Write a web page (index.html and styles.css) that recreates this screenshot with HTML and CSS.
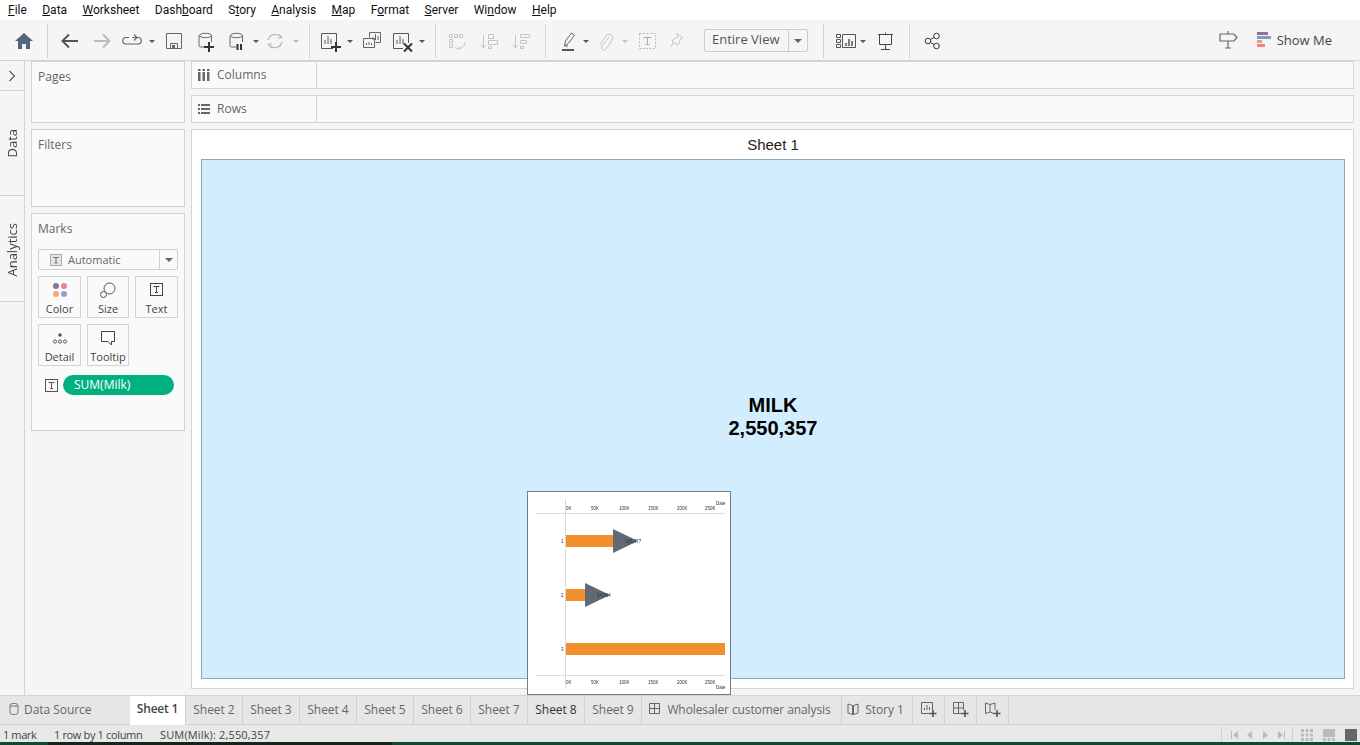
FILE: index.html
```html
<!DOCTYPE html>
<html lang="en">
<head>
    <meta charset="UTF-8">
    <meta name="viewport" content="width=device-width, initial-scale=1.0">
    <title>Tableau - Sheet 1</title>
    <link rel="stylesheet" href="styles.css">
</head>
<body>
    <nav class="menubar">
        <span><u>F</u>ile</span>
        <span><u>D</u>ata</span>
        <span><u>W</u>orksheet</span>
        <span>Dash<u>b</u>oard</span>
        <span>S<u>t</u>ory</span>
        <span><u>A</u>nalysis</span>
        <span><u>M</u>ap</span>
        <span>F<u>o</u>rmat</span>
        <span><u>S</u>erver</span>
        <span>Wi<u>n</u>dow</span>
        <span><u>H</u>elp</span>
    </nav>

    <div class="toolbar">
        <svg width="47" height="40" viewBox="0 20 47 40">
            <path d="M15 41l9-8 9 8h-3v8h-4v-5h-4v5h-4v-8z" fill="#56667a"/>
        </svg>
        <div class="sep"></div>
        <svg width="261" height="40" viewBox="48 20 261 40" fill="none" stroke-width="1">
            <path d="M78 41H63M69 34.500l-6.500 6.500 6.500 6.500" stroke="#555" stroke-width="2"/>
            <path d="M94 41h15M103 34.500l6.500 6.500-6.500 6.500" stroke="#bbb" stroke-width="2"/>
            <path d="M129 37.500h-3a3 3 0 0 0 0 6.500h12a3 3 0 0 0 0-6.500h-6M134 34.500l3 3-3 3" stroke="#666" stroke-width="1.200"/>
            <path d="M149 40h6l-3 3z" fill="#555"/>
            <path d="M166.500 33.500h15v15h-15zM170.500 48.500v-5h7v5" stroke="#666"/>
            <rect x="172" y="45" width="3" height="3" fill="#666"/>
            <path d="M208 47h-7.500a1.500 1.500 0 0 1-1.500-1.500V35.500M211.500 35.500V42M199.500 35.500a6 2.200 0 0 1 12 0a6 2.200 0 0 1-12 0" stroke="#666"/>
            <path d="M209 42v10M204 47h10" stroke="#333" stroke-width="2"/>
            <path d="M236 47h-4.500a1.500 1.500 0 0 1-1.500-1.500V35.500M242.500 35.500V42M230.500 35.500a6 2.200 0 0 1 12 0a6 2.200 0 0 1-12 0" stroke="#666"/>
            <path d="M237.500 44v6M241 44v6" stroke="#333" stroke-width="2"/>
            <path d="M253 40h6l-3 3z" fill="#555"/>
            <path d="M268 40a7.500 7.500 0 0 1 13-3M282 42a7.500 7.500 0 0 1-13 3M279 34.500l2.500 3-3.500 1M271 47.500l-2.500-3 3.500-1" stroke="#bbb" stroke-width="1.300"/>
            <path d="M293 40h6l-3 3z" fill="#bbb"/>
        </svg>
        <div class="sep"></div>
        <svg width="125" height="40" viewBox="310 20 125 40" fill="none">
            <path d="M333 48.500h-11.500v-15h15V43M325 44v-4M328 44v-8M331 44v-5" stroke="#555"/>
            <path d="M336 42v10M331 47h10" stroke="#333" stroke-width="2"/>
            <path d="M347 40h6l-3 3z" fill="#555"/>
            <path d="M369.500 37.500v-5h11v10h-5M373 40v-3M375.500 40v-6M378 40v-4M363.500 38.500h11v9h-11zM366.500 45v-2M369 45v-3M371.500 45v-2" stroke="#666"/>
            <path d="M403 48.500h-9.500v-15h15V43M397 44v-4M400 44v-8M403 44v-5" stroke="#555"/>
            <path d="M404 43.500l8 8M412 43.500l-8 8" stroke="#333" stroke-width="2"/>
            <path d="M419 40h6l-3 3z" fill="#555"/>
        </svg>
        <div class="sep"></div>
        <svg width="109" height="40" viewBox="436 20 109 40" fill="none" stroke="#c4c4c4">
            <path d="M449.500 34.500h3v3h-3zM454.500 34.500h3v3h-3zM459.500 34.500h3v3h-3zM449.500 39.500h3v3h-3zM449.500 44.500h3v3h-3zM465 42a8 8 0 0 1-7 7M455 47l3 2.500 1.500-3"/>
            <path d="M483.500 35v13M481 45l2.500 3 2.500-3M488.500 34.500h5v4h-5zM488.500 40.500h9v4h-9zM488.500 46.500h3v2h-3z"/>
            <path d="M515.500 35v13M513 45l2.500 3 2.500-3M520.500 34.500h9v3h-9zM520.500 40.500h6v3h-6zM520.500 46.500h3v2h-3z"/>
        </svg>
        <div class="sep"></div>
        <div class="tool-mid">
            <svg width="150" height="40" viewBox="546 20 150 40" fill="none">
                <path d="M564.500 46l1-5 6-8 3 2.200-6 8zM565 46h3" stroke="#666"/>
                <rect x="562" y="49" width="12" height="2" fill="#555"/>
                <path d="M583 40h6l-3 3z" fill="#555"/>
                <path d="M609 37l-7 9a2.500 2.500 0 0 0 4 3l6-9a3.500 3.500 0 0 0-6-4l-6.500 9" stroke="#c4c4c4"/>
                <path d="M622 40h6l-3 3z" fill="#c4c4c4"/>
                <rect x="639.500" y="33.500" width="16" height="15" stroke="#bbb" stroke-dasharray="2 1.500"/>
                <path d="M643.500 37.500h8M647.500 37.500v7M645.500 44.500h4" stroke="#aaa"/>
                <path d="M677 33.500l6 4.500-2.500 1-2 5-1.500 1-5-4 1-1.500 4.500-2zM673.500 42l-2.500 5" stroke="#c4c4c4"/>
            </svg>
            <div class="view-select">
                <span class="view-select-text">Entire View</span>
                <span class="view-select-arrow"><i class="caret"></i></span>
            </div>
        </div>
        <div class="sep"></div>
        <svg width="85" height="40" viewBox="824 20 85 40" fill="none">
            <path d="M836.500 34.500h4v3h-4zM836.500 39.500h4v3h-4zM836.500 44.500h4v3h-4zM842.500 34.500h13v13h-13z" stroke="#555"/>
            <path d="M846 46v-3M849 46v-7M852 46v-5" stroke="#555" stroke-width="1.500"/>
            <path d="M860 40h6l-3 3z" fill="#555"/>
            <path d="M878 34.500h15M879.500 34.500v10h12v-10M885.500 44.500v5M881 49.500h9M885.500 34.500v-2" stroke="#444"/>
        </svg>
        <div class="sep"></div>
        <svg width="40" height="40" viewBox="910 20 40 40" fill="none">
            <circle cx="928" cy="41" r="2.800" stroke="#333"/>
            <circle cx="936.500" cy="36" r="2.800" stroke="#333"/>
            <circle cx="936.500" cy="46" r="2.800" stroke="#333"/>
            <path d="M930.500 39.500l3.500-2M930.500 42.500l3.500 2" stroke="#333"/>
        </svg>
        <div class="toolbar-right">
            <svg width="20" height="20" viewBox="0 0 20 20" fill="none">
                <path d="M1 4h14l3 3.500-3 3.500H1zM9 4V1M9 11v7M6 18h6" stroke="#666" stroke-width="1.200"/>
            </svg>
            <div class="showme">
                <svg width="14" height="16" viewBox="0 0 14 16">
                    <rect x="0" y="0" width="11" height="3" fill="#8a7596"/>
                    <rect x="0" y="4" width="14" height="3" fill="#7f9cc9"/>
                    <rect x="0" y="8" width="5" height="3" fill="#f0a070"/>
                    <rect x="0" y="12" width="8" height="3" fill="#f0808a"/>
                </svg>
                <span>Show Me</span>
            </div>
        </div>
    </div>

    <div class="workspace">
        <aside class="rail">
            <div class="rail-item rail-toggle">
                <svg width="8" height="12" viewBox="0 0 8 12" fill="none"><path d="M1.500 1l5 5-5 5" stroke="#555" stroke-width="1.100"/></svg>
            </div>
            <div class="rail-item rail-data"><span>Data</span></div>
            <div class="rail-item rail-analytics"><span>Analytics</span></div>
        </aside>

        <section class="cards">
            <div class="card card-pages"><h2>Pages</h2></div>
            <div class="card card-filters"><h2>Filters</h2></div>
            <div class="card card-marks">
                <h2>Marks</h2>
                <div class="mark-select">
                    <svg width="12" height="12" viewBox="0 0 12 12" fill="none"><rect x=".5" y=".5" width="11" height="11" fill="#e4e4e4" stroke="#aaa"/><path d="M3 3.500h6M6 3.500v5.500M4.500 9h3" stroke="#777"/></svg>
                    <span class="mark-select-text">Automatic</span>
                    <span class="mark-select-arrow"><i class="caret"></i></span>
                </div>
                <div class="mark-grid">
                    <div class="mark-btn">
                        <svg width="16" height="16" viewBox="0 0 16 16"><circle cx="4" cy="4" r="3" fill="#8a7596"/><circle cx="12" cy="4" r="3" fill="#f0808a"/><circle cx="4" cy="12" r="3" fill="#f0a878"/><circle cx="12" cy="12" r="3" fill="#85a5cf"/></svg>
                        <span>Color</span>
                    </div>
                    <div class="mark-btn">
                        <svg width="16" height="16" viewBox="0 0 16 16" fill="none"><circle cx="9.500" cy="6.500" r="5.500" stroke="#555"/><circle cx="3.500" cy="12.500" r="3" fill="#fafafa" stroke="#555"/></svg>
                        <span>Size</span>
                    </div>
                    <div class="mark-btn">
                        <svg width="16" height="16" viewBox="0 0 16 16" fill="none"><rect x="1.500" y="1.500" width="12" height="12" stroke="#444"/><path d="M4.500 4.500h6M7.500 4.500v6M6 10.500h3" stroke="#444"/></svg>
                        <span>Text</span>
                    </div>
                    <div class="mark-btn">
                        <svg width="16" height="16" viewBox="0 0 16 16" fill="none"><circle cx="8" cy="5" r="1.800" fill="#555"/><circle cx="3" cy="11.500" r="1.600" stroke="#555"/><circle cx="8" cy="11.500" r="1.600" stroke="#555"/><circle cx="13" cy="11.500" r="1.600" stroke="#555"/></svg>
                        <span>Detail</span>
                    </div>
                    <div class="mark-btn">
                        <svg width="16" height="16" viewBox="0 0 16 16" fill="none"><path d="M1.500 1.500h13v10h-3v3.500l-3.500-3.500h-6.500z" stroke="#444"/></svg>
                        <span>Tooltip</span>
                    </div>
                </div>
                <div class="mark-pill-row">
                    <svg width="13" height="13" viewBox="0 0 13 13" fill="none"><rect x=".5" y=".5" width="12" height="12" stroke="#555"/><path d="M3.500 3.500h6M6.500 3.500v6M5 9.500h3" stroke="#555"/></svg>
                    <span class="pill">SUM(Milk)</span>
                </div>
            </div>
        </section>

        <section class="stage">
            <div class="shelf">
                <div class="shelf-label">
                    <svg width="12" height="12" viewBox="0 0 12 12" fill="#666"><rect x="0" y="3" width="2.500" height="9"/><rect x="4.500" y="3" width="2.500" height="9"/><rect x="9" y="3" width="2.500" height="9"/><rect x="0" y="0" width="2.500" height="2"/><rect x="4.500" y="0" width="2.500" height="2"/><rect x="9" y="0" width="2.500" height="2"/></svg>
                    <span>Columns</span>
                </div>
            </div>
            <div class="shelf">
                <div class="shelf-label">
                    <svg width="12" height="12" viewBox="0 0 12 12" fill="#666"><rect x="0" y="1" width="2" height="2"/><rect x="3" y="1" width="9" height="2"/><rect x="0" y="5" width="2" height="2"/><rect x="3" y="5" width="9" height="2"/><rect x="0" y="9" width="2" height="2"/><rect x="3" y="9" width="9" height="2"/></svg>
                    <span>Rows</span>
                </div>
            </div>
            <div class="view">
                <div class="view-title">Sheet 1</div>
                <div class="pane">
                    <div class="big-text">MILK<br>2,550,357</div>
                </div>
                <div class="thumb">
                    <svg class="thumb-chart" width="202" height="202" viewBox="0 1 202 202">
                        <path d="M37.500 8v190" stroke="#d8d8d8"/>
                        <path d="M8 22.500h189M8 184.500h189" stroke="#dcdcdc"/>
                        <rect x="38" y="44" width="47" height="12" fill="#f28e2b"/>
                        <rect x="38" y="98" width="19" height="12" fill="#f28e2b"/>
                        <rect x="38" y="152" width="159" height="12" fill="#f28e2b"/>
                        <path d="M85 38v24l25-12z" fill="#5f6a75"/>
                        <path d="M57 92v24l25-12z" fill="#5f6a75"/>
                        <g class="thumb-text">
                            <text x="188" y="14">Date</text>
                            <text x="38" y="19">0K</text><text x="63" y="19">50K</text><text x="91" y="19">100K</text><text x="120" y="19">150K</text><text x="149" y="19">200K</text><text x="177" y="19">250K</text>
                            <text x="38" y="193">0K</text><text x="63" y="193">50K</text><text x="91" y="193">100K</text><text x="120" y="193">150K</text><text x="149" y="193">200K</text><text x="177" y="193">250K</text>
                            <text x="188" y="198">Date</text>
                            <text x="33" y="52">1</text><text x="33" y="106">2</text><text x="33" y="160">3</text>
                            <text x="97" y="52">106,477</text><text x="69" y="106">54,864</text>
                        </g>
                    </svg>
                </div>
            </div>
        </section>
    </div>

    <div class="tabs">
        <div class="tab tab-source">
            <svg width="10" height="12" viewBox="0 0 10 12" fill="none"><rect x="1" y=".5" width="8" height="11" rx="2.500" stroke="#777"/><path d="M1 3h8" stroke="#777"/></svg>
            <span>Data Source</span>
        </div>
        <div class="tab tab-active">Sheet 1</div>
        <div class="tab tab-sheet">Sheet 2</div>
        <div class="tab tab-sheet">Sheet 3</div>
        <div class="tab tab-sheet">Sheet 4</div>
        <div class="tab tab-sheet">Sheet 5</div>
        <div class="tab tab-sheet">Sheet 6</div>
        <div class="tab tab-sheet">Sheet 7</div>
        <div class="tab tab-sheet tab-dark">Sheet 8</div>
        <div class="tab tab-sheet">Sheet 9</div>
        <div class="tab tab-dash">
            <svg width="12" height="12" viewBox="0 0 12 12" fill="none"><path d="M.5 .5h10v10h-10zM.5 5.500h10M5.500 .5v10" stroke="#666"/></svg>
            <span>Wholesaler customer analysis</span>
        </div>
        <div class="tab tab-story">
            <svg width="12" height="12" viewBox="0 0 12 12" fill="none"><path d="M1 1l4.500 1.500v9L1 10zM11 1L6.500 2.500v9L11 10z" stroke="#666"/></svg>
            <span>Story 1</span>
        </div>
        <div class="tab tab-add">
            <svg width="16" height="16" viewBox="0 0 16 16" fill="none"><path d="M9 11.500H.5V.5h11V8M3.500 8V6M6 8V3M8.500 8V5" stroke="#666"/><path d="M12 8v7M8.500 11.500h7" stroke="#555" stroke-width="1.600"/></svg>
        </div>
        <div class="tab tab-add">
            <svg width="16" height="16" viewBox="0 0 16 16" fill="none"><path d="M9 11.500H.5V.5h10V8M.5 6h10M5.500 .5v11" stroke="#666"/><path d="M12 8v7M8.500 11.500h7" stroke="#555" stroke-width="1.600"/></svg>
        </div>
        <div class="tab tab-add">
            <svg width="16" height="16" viewBox="0 0 16 16" fill="none"><path d="M9 11.500L5 10 .5 11.500V1L5 2.500 10 1v7M5 2.500V10" stroke="#666"/><path d="M12 8v7M8.500 11.500h7" stroke="#555" stroke-width="1.600"/></svg>
        </div>
    </div>

    <footer class="status">
        <span class="status-mark">1 mark</span>
        <span class="status-size">1 row by 1 column</span>
        <span class="status-value">SUM(Milk): 2,550,357</span>
        <div class="status-nav">
            <svg width="60" height="12" viewBox="0 0 60 12" fill="#bbb"><rect x="1" y="2" width="1" height="8"/><path d="M8 2v8L3 6z"/><path d="M22 2v8l-5-4z"/><path d="M33 2v8l5-4z"/><path d="M48 2v8l5-4z"/><rect x="54" y="2" width="1" height="8"/></svg>
        </div>
        <div class="status-views">
            <svg width="12" height="12" viewBox="0 0 12 12" fill="#bbb"><rect x="0" y="0" width="3" height="3"/><rect x="4.500" y="0" width="3" height="3"/><rect x="9" y="0" width="3" height="3"/><rect x="0" y="4.500" width="3" height="3"/><rect x="4.500" y="4.500" width="3" height="3"/><rect x="9" y="4.500" width="3" height="3"/><rect x="0" y="9" width="3" height="3"/><rect x="4.500" y="9" width="3" height="3"/><rect x="9" y="9" width="3" height="3"/></svg>
            <svg width="12" height="12" viewBox="0 0 12 12" fill="#bbb"><rect x="0" y="0" width="12" height="8"/><rect x="0" y="9" width="3" height="3"/><rect x="4.500" y="9" width="3" height="3"/><rect x="9" y="9" width="3" height="3"/></svg>
            <svg width="12" height="12" viewBox="0 0 12 12" fill="#666"><rect x="0" y="0" width="12" height="12"/></svg>
        </div>
    </footer>
    <div class="taskbar"></div>
</body>
</html>
```

FILE: styles.css
```css
* {
    box-sizing: border-box;
}
html, body {
    height: 745px;
    overflow: hidden;
}
body {
    margin: 0;
    display: flex;
    flex-direction: column;
    font-family: "Open Sans", Arial, sans-serif;
    font-size: 12px;
    color: #555;
    background: #f5f5f5;
}
svg {
    display: block;
    flex-shrink: 0;
}

/* menu */
.menubar {
    height: 20px;
    background: #fff;
    display: flex;
    align-items: center;
    padding-left: 8px;
    gap: 15.4px;
    color: #111;
    font-family: Roboto, Arial, sans-serif;
    font-size: 12px;
}

/* toolbar */
.toolbar {
    height: 41px;
    display: flex;
    border-bottom: 1px solid #d4d4d4;
    background: #f5f5f5;
}
.sep {
    width: 1px;
    height: 34px;
    margin-top: 4px;
    background: #d4d4d4;
}
.tool-mid {
    width: 277px;
    display: flex;
    align-items: flex-start;
}
.view-select {
    width: 104px;
    height: 23px;
    margin: 9px 0 0 8px;
    border: 1px solid #ccc;
    border-radius: 2px;
    display: flex;
    align-items: center;
    font-size: 13px;
    line-height: 19px;
    color: #555;
}
.view-select-text {
    flex: 1;
    padding-left: 7px;
    padding-bottom: 2px;
}
.view-select-arrow {
    width: 19px;
    height: 100%;
    border-left: 1px solid #ccc;
    display: flex;
    align-items: center;
    justify-content: center;
}
.caret {
    display: block;
    width: 0;
    height: 0;
    border-left: 4px solid transparent;
    border-right: 4px solid transparent;
    border-top: 4px solid #666;
}
.toolbar-right {
    margin-left: auto;
    display: flex;
    align-items: center;
    padding: 0 28px 0 0;
    gap: 18px;
}
.showme {
    display: flex;
    align-items: center;
    gap: 6px;
    font-size: 13px;
    color: #444;
}

/* workspace */
.workspace {
    height: 634px;
    display: flex;
    gap: 6px;
    padding-right: 6px;
}
.rail {
    width: 25px;
    border-right: 1px solid #d4d4d4;
    display: flex;
    flex-direction: column;
}
.rail-item {
    display: flex;
    align-items: center;
    justify-content: center;
    border-bottom: 1px solid #d4d4d4;
}
.rail-item span {
    writing-mode: vertical-rl;
    transform: rotate(180deg);
    font-size: 13px;
    color: #444;
}
.rail-toggle {
    height: 30px;
}
.rail-data {
    height: 105px;
}
.rail-analytics {
    height: 106px;
}
.rail-analytics span {
    margin-top: 2px;
}
.cards {
    width: 154px;
    display: flex;
    flex-direction: column;
    gap: 6px;
}
.card {
    border: 1px solid #d4d4d4;
    background: #fafafa;
    padding: 7px 6px;
}
.card h2 {
    margin: 0;
    font-size: 12px;
    font-weight: 400;
    color: #666;
    line-height: 16px;
}
.card-pages {
    height: 62px;
}
.card-filters {
    height: 78px;
}
.card-marks {
    height: 218px;
}
.mark-select {
    height: 21px;
    margin-top: 12px;
    border: 1px solid #d0d0d0;
    border-radius: 2px;
    display: flex;
    align-items: center;
    padding-left: 11px;
    color: #666;
    font-size: 11px;
}
.mark-select-text {
    flex: 1;
    padding-left: 6px;
}
.mark-select-arrow {
    width: 18px;
    height: 100%;
    border-left: 1px solid #d0d0d0;
    display: flex;
    align-items: center;
    justify-content: center;
}
.mark-grid {
    display: grid;
    grid-template-columns: 43px 42px 43px;
    grid-auto-rows: 42px;
    column-gap: 6px;
    row-gap: 6px;
    margin-top: 6px;
}
.mark-btn {
    border: 1px solid #d4d4d4;
    display: flex;
    flex-direction: column;
    align-items: center;
    padding-top: 5px;
    gap: 4px;
    font-size: 11px;
    line-height: 14px;
    color: #444;
}
.mark-pill-row {
    display: flex;
    align-items: center;
    gap: 5px;
    margin-top: 9px;
    padding-left: 7px;
}
.pill {
    width: 111px;
    height: 20px;
    border-radius: 10px;
    background: #00b180;
    color: #fff;
    padding-left: 11px;
    line-height: 19px;
    font-size: 12px;
}

/* shelves and view */
.stage {
    flex: 1;
    display: flex;
    flex-direction: column;
    gap: 6px;
}
.shelf {
    height: 28px;
    border: 1px solid #d4d4d4;
    background: #fafafa;
}
.shelf-label {
    width: 125px;
    height: 100%;
    border-right: 1px solid #d4d4d4;
    display: flex;
    align-items: center;
    padding-left: 6px;
    gap: 7px;
    color: #666;
    font-size: 12px;
}
.shelf-label span {
    margin-top: -2px;
}
.view {
    position: relative;
    height: 560px;
    background: #fff;
    border: 1px solid #d4d4d4;
    padding: 0 8px 0 9px;
}
.view-title {
    height: 29px;
    line-height: 29px;
    text-align: center;
    font-family: "Liberation Sans", Arial, sans-serif;
    font-size: 15px;
    color: #222;
}
.pane {
    height: 520px;
    border: 1px solid #8fa6b5;
    background: #d2edfe;
    display: flex;
    align-items: center;
    justify-content: center;
    padding-bottom: 4px;
}
.big-text {
    font-family: "Liberation Sans", Arial, sans-serif;
    font-size: 20px;
    font-weight: 700;
    line-height: 23px;
    color: #000;
    text-align: center;
}
.thumb {
    position: absolute;
    left: 335px;
    top: 361px;
    width: 204px;
    height: 204px;
    border: 1px solid #6a7f95;
    background: #fff;
}
.thumb-chart {
    filter: blur(0.4px);
}
.thumb-text text {
    font-family: "Liberation Sans", Arial, sans-serif;
    font-size: 4.5px;
    fill: #333;
}

/* tabs */
.tabs {
    height: 30px;
    display: flex;
    background: #e6e6e6;
    border-top: 1px solid #d4d4d4;
    border-bottom: 1px solid #d4d4d4;
    font-size: 12px;
    letter-spacing: -0.05px;
    color: #666;
}
.tab {
    display: flex;
    align-items: center;
    justify-content: center;
    border-right: 1px solid #d0d0d0;
    gap: 6px;
    padding-bottom: 2px;
}
.tab-source {
    width: 130px;
    border-right: none;
    justify-content: flex-start;
    padding-left: 9px;
    gap: 5px;
}
.tab-active {
    width: 56px;
    background: #fff;
    font-weight: 600;
    color: #444;
    height: 29px;
    padding-bottom: 4px;
    letter-spacing: -0.2px;
}
.tab-sheet {
    width: 57px;
}
.tab-dark {
    color: #333;
}
.tab-dash {
    width: 200px;
    padding-right: 3px;
    letter-spacing: -0.1px;
}
.tab-story {
    width: 71px;
    padding-right: 3px;
}
.tab-add {
    width: 32px;
    padding-bottom: 0;
}

/* status */
.status {
    height: 17px;
    display: flex;
    align-items: center;
    background: #e8e8e8;
    font-size: 11px;
    color: #444;
    padding: 2px 0 0 3px;
}
.status-mark {
    width: 51px;
    letter-spacing: -0.4px;
}
.status-size {
    width: 106px;
    letter-spacing: -0.35px;
}
.status-value {
    letter-spacing: 0.15px;
}
.status-nav {
    margin-left: auto;
    width: 71px;
    height: 100%;
    border-left: 1px solid #d0d0d0;
    display: flex;
    align-items: center;
    padding-left: 8px;
}
.status-views {
    width: 68px;
    height: 100%;
    border-left: 1px solid #d0d0d0;
    display: flex;
    align-items: center;
    gap: 10px;
    padding-left: 8px;
}
.taskbar {
    height: 3px;
    background: linear-gradient(to right, #0f4a2e 48px, #14251c 48px, #14251c 392px, #0f4a2e 392px);
}
```
